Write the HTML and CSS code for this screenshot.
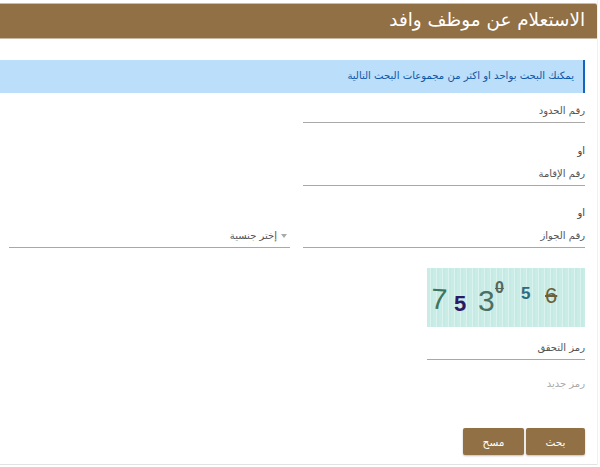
FILE: index.html
```html
<!DOCTYPE html>
<html lang="ar" dir="rtl">
<head>
<meta charset="utf-8">
<title>الاستعلام عن موظف وافد</title>
<link rel="stylesheet" href="styles.css">
</head>
<body>
<main class="card">
  <h1 class="title">الاستعلام عن موظف وافد</h1>
  <p class="notice"><span>يمكنك البحث بواحد او اكثر من مجموعات البحث التالية</span></p>
  <form class="form">
    <div class="row">
      <div class="field"><span class="label">رقم الحدود</span></div>
    </div>
    <div class="or">او</div>
    <div class="row">
      <div class="field"><span class="label">رقم الإقامة</span></div>
    </div>
    <div class="or or-second">او</div>
    <div class="row">
      <div class="field"><span class="label">رقم الجواز</span></div>
      <div class="field select">
        <span class="caret"></span><span class="label">إختر جنسية</span>
      </div>
    </div>
    <div class="captcha">
      <span class="d d1">7</span><span class="d d2">5</span><span class="d d3">3</span><span class="d d4">0</span><span class="d d5">5</span><span class="d d6">6</span>
    </div>
    <div class="code"><span class="label">رمز التحقق</span></div>
    <a class="renew">رمز جديد</a>
    <div class="actions">
      <button class="btn" type="button">بحث</button>
      <button class="btn btn-clear" type="button">مسح</button>
    </div>
  </form>
</main>
</body>
</html>
```
FILE: styles.css
```css
* { box-sizing: border-box; }
html, body { margin: 0; height: 467px; overflow: hidden; background: #fff; }
body { font-family: "DejaVu Sans", "Noto Sans", sans-serif; color: #555; }
.card {
  width: 597px;
  margin-right: 3px;
  height: 465px;
  padding-top: 4px;
  border-bottom: 1px solid #e2e2e2;
  box-shadow: 1px 0 0 #f0f0f0;
  background: #fff;
}
.title {
  margin: 0;
  height: 34px;
  padding: 0 12px 0 0;
  background: #927045;
  border-radius: 0 2px 0 0;
  box-shadow: 0 -1px 0 #cdbda8, 0 1px 0 #c9b9a3;
  color: #fff;
  font-size: 18.4px;
  font-weight: 400;
  line-height: 31px;
  white-space: nowrap;
}
.notice {
  margin: 22px 12px 0 0;
  height: 33px;
  display: flex;
  align-items: center;
  padding: 0 9px 2px 0;
  background: #bbdefb;
  border-right: 2px solid #1565c0;
  color: #0d57a8;
  font-size: 10.1px;
}
.form { padding: 0 12px 0 0; }
.row { display: flex; gap: 13px; }
.field {
  width: 282px;
  height: 30px;
  display: flex;
  align-items: flex-end;
  padding-bottom: 4px;
  border-bottom: 1px solid #a8a8a8;
}
.select {
  width: 281px;
  padding-right: 3px;
  gap: 4px;
}
.caret {
  width: 0;
  height: 0;
  margin-bottom: 5px;
  border-left: 3.5px solid transparent;
  border-right: 3.5px solid transparent;
  border-top: 4px solid #aaa;
}
.label { font-size: 10px; line-height: 14px; color: #555; }
.or { font-size: 10px; color: #444; height: 33px; padding-top: 21px; line-height: 14px; }
.or-second { height: 32px; padding-top: 20px; }
.captcha {
  width: 158px;
  height: 59px;
  margin-top: 20px;
  position: relative;
  overflow: hidden;
  background: repeating-linear-gradient(90deg, #c9ece6 0 3px, #dbf3ee 3px 4px, #c4eae3 4px 6px);
  font-family: "Liberation Sans", sans-serif;
}
.d { position: absolute; line-height: 1; }
.d1 { left: 4px; top: 17px; font-size: 29px; color: #3f7560; transform: rotate(4deg); }
.d2 { left: 27px; top: 25px; font-size: 22px; color: #2a1a66; font-weight: 700; }
.d3 { left: 51px; top: 18px; font-size: 30px; color: #4a7064; }
.d4 { left: 68px; top: 12px; font-size: 16px; font-weight: 700; color: #57665a; text-decoration: line-through; }
.d5 { left: 94px; top: 17px; font-size: 17px; color: #2c6b80; font-weight: 700; }
.d6 { left: 118px; top: 17px; font-size: 22px; color: #6b5f3c; text-decoration: line-through; }
.code {
  width: 158px;
  height: 33px;
  display: flex;
  align-items: flex-end;
  padding-bottom: 4px;
  border-bottom: 1px solid #a8a8a8;
}
.renew { display: block; margin-top: 17px; font-size: 10px; color: #aaa; line-height: 14px; }
.actions { display: flex; gap: 2px; margin-top: 37px; }
.btn {
  width: 59px;
  height: 27px;
  padding: 0;
  border: 0;
  border-radius: 2px;
  background: #927045;
  box-shadow: 0 1px 2px rgba(0,0,0,.25);
  color: #fff;
  font-family: inherit;
  font-size: 10.5px;
}
.btn-clear { width: 61px; }
```
